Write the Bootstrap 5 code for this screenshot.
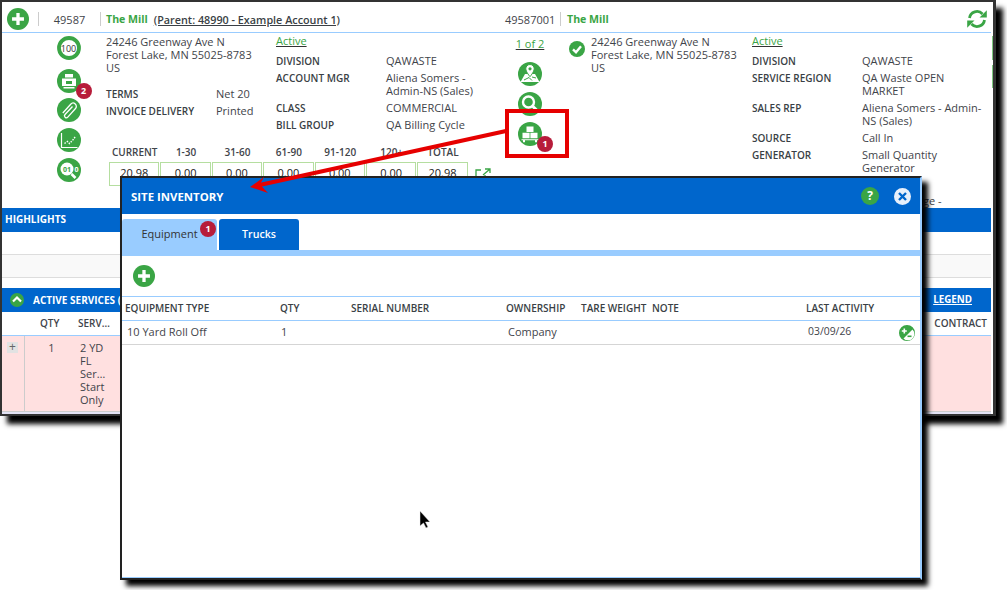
<!DOCTYPE html>
<html lang="en"><head><meta charset="utf-8"><title>Site Inventory</title>
<link href="https://cdn.jsdelivr.net/npm/bootstrap@5.3.0/dist/css/bootstrap.min.css" rel="stylesheet">
<style>
html,body{margin:0;background:#fff;height:590px;overflow:hidden}
body{font-family:"Open Sans","Noto Sans",sans-serif;font-size:11px;line-height:13px;color:#3f444a;position:relative;width:1007px}
a{color:#3aa545}
.win{position:absolute;left:0;top:0;width:996px;height:416px;background:#fff;border:2px solid #333;border-right-width:3px;box-shadow:7px 8px 5px #000;overflow:hidden}
.hdr{height:31px;width:989px;border-bottom:1px solid #99ccff;position:relative;padding-top:4px}
.hdr .half{height:26px}
.sep{border-left:1px solid #ccc;height:14px}
.nm{color:#3aa545;font-weight:700;font-size:10.600px}
.parent{font-weight:600;color:#3a3f45;text-decoration:underline;font-size:10.800px}
.ico{display:block;width:24px;height:24px}
.big{width:22px;height:22px;display:block}
.icocol{width:104px;padding-top:3px;gap:5.7px}
.icowrap{position:relative;width:24px;height:24px}
.cnt{position:absolute;width:16px;height:16px;border-radius:50%;background:#b71c3a;color:#fff;font-size:9px;font-weight:700;line-height:16px;text-align:center;right:-11px;bottom:-6px}
.lbl{font-weight:600;font-size:10px;color:#3a3f45;text-transform:uppercase;margin-top:1px;margin-bottom:-1px}
.dl{display:grid;grid-template-columns:110px 1fr;row-gap:4px}
.act{color:#3aa545;text-decoration:underline;text-decoration-color:#333;line-height:13px;display:block}
.age{display:grid;grid-template-columns:repeat(7,51.4px);margin-left:3px;text-align:center}
.age b{font-size:10px;font-weight:600;line-height:12px;height:16px}
.age i{font-style:normal;border:1px solid #b5dea0;height:24px;color:#222;font-size:11px;line-height:20px;margin-right:1px}
.blue{background:#0066cc;color:#fff;font-weight:700;font-size:10px;height:24px;width:989px;line-height:23px;padding-left:3px}
.grayrow{height:24px;width:989px;background:#f9f9f9;border-top:1px solid #ddd;border-bottom:1px solid #ddd;margin-top:22px}
.svcs{height:24px;margin-top:10px}
.svcs a{color:#fff;text-decoration:underline;font-size:9.800px}
.svhead{height:24px;width:989px;border-bottom:1px solid #99ccff;line-height:22px;font-weight:600;font-size:10px}
.svrow{height:76px;width:989px;background:#ffe0e0;border-bottom:1px solid #ccc;position:relative}
.pl{width:11px;height:11px;background:#e2e2e2;color:#666;line-height:10px;text-align:center;font-size:12px;margin:6px 0 0 5px}
.lav{height:4px;background:#e2e2f4;width:989px}
.stripe{position:absolute;right:0;width:1px;background:#7fc97f}
.modal-box{position:absolute;left:120px;top:176px;width:802px;height:404px;border:2px solid #222;background:#fff;box-shadow:6px 6px 5px #000,inset 0 -1px #99ccff;border-right-color:#99ccff}
.mh{height:36px;background:#0066cc;color:#fff;font-weight:700;font-size:11.400px;padding:0 9px 0 9px}
.tabs-x{height:42px;padding-top:5px;border-bottom:6px solid #99ccff;gap:2px}
.tabx{height:31px;line-height:30px;text-align:center;border-radius:3px 3px 0 0;position:relative;font-size:11px}
.t1{width:95px;background:#99ccff;color:#333}
.t2{width:80px;background:#0066cc;color:#fff;font-weight:600;font-size:10.600px}
.tools{height:40px;padding:9px 0 0 11px}
.tbl{table-layout:fixed;width:100%;margin:0;font-size:11px;color:#3f444a}
.tbl th{font-size:10px;font-weight:600;height:24px;padding:0 0 0 3px;border-top:1px solid #99ccff;border-bottom:1px solid #99ccff;vertical-align:middle;line-height:13px;white-space:nowrap;color:#3a3f45}
.tbl td{height:24px;padding:0 0 2px 3px;border-bottom:1px solid #d5d5d5;vertical-align:middle;color:#3f444a}
.ptr{position:absolute;left:0;top:0;width:1007px;height:590px;pointer-events:none}
.redbox{position:absolute;left:505px;top:109px;width:64px;height:49px;border:4px solid #e60000}
</style></head><body>

<svg width="0" height="0" class="position-absolute"><defs>
<symbol id="plus" viewBox="0 0 24 24"><circle cx="12" cy="12" r="12" fill="#3aa545"/><path d="M12 5.500v13M5.500 12h13" stroke="#fff" stroke-width="3.600"/></symbol>
<symbol id="gauge" viewBox="0 0 24 24"><circle cx="12" cy="12" r="10" fill="#fff" stroke="#3aa545" stroke-width="3.800"/></symbol>
<symbol id="printer" viewBox="0 0 24 24"><circle cx="12" cy="12" r="12" fill="#3aa545"/><path d="M8 5h8v3.500H8zM5 9.500h14v7.500H5zM6.500 18h11v1.500h-11z" fill="#fff"/><path d="M9 12h6v3H9z" fill="#3aa545"/></symbol>
<symbol id="clip" viewBox="0 0 24 24"><circle cx="12" cy="12" r="12" fill="#3aa545"/><path d="M15.500 8.500L8 16.500a1.900 1.900 0 0 0 2.800 2.600L18.500 10.500a3.200 3.200 0 0 0-4.800-4.300L5.800 15" fill="none" stroke="#fff" stroke-width="1.300"/></symbol>
<symbol id="chart" viewBox="0 0 24 24"><circle cx="12" cy="12" r="12" fill="#3aa545"/><path d="M4.500 5v14.500h16" fill="none" stroke="#fff" stroke-width="1.200"/><path d="M7.500 15.500l3-2 2 2 3-3 3-4" fill="none" stroke="#fff" stroke-width="1.400" stroke-dasharray="1.500 1.200"/></symbol>
<symbol id="lens01" viewBox="0 0 24 24"><circle cx="12" cy="12" r="12" fill="#3aa545"/><circle cx="10" cy="11" r="6.500" fill="#fff"/><path d="M14.500 16l4 4" stroke="#fff" stroke-width="2.600"/><text x="10" y="13.500" text-anchor="middle" font-size="7" font-weight="700" fill="#3aa545" font-family="Open Sans">01</text><text x="19.500" y="13.500" text-anchor="middle" font-size="7" font-weight="700" fill="#fff" font-family="Open Sans">0</text></symbol>
<symbol id="map" viewBox="0 0 24 24"><circle cx="12" cy="12" r="12" fill="#3aa545"/><path d="M2.500 20L7 12h10l4.500 8z" fill="#fff"/><path d="M12 2.500a4.200 4.200 0 0 1 4.200 4.200c0 3-4.200 8-4.200 8s-4.200-5-4.200-8A4.200 4.200 0 0 1 12 2.500z" fill="#fff" stroke="#3aa545"/><circle cx="12" cy="6.800" r="1.600" fill="#3aa545"/><path d="M6 18l5-2.500 3 3M14 15l4 1" stroke="#3aa545" fill="none"/></symbol>
<symbol id="lens" viewBox="0 0 24 24"><circle cx="12" cy="12" r="12" fill="#3aa545"/><circle cx="10.500" cy="10" r="5.500" fill="#3aa545" stroke="#fff" stroke-width="2.400"/><path d="M14.500 14l5 5" stroke="#fff" stroke-width="3"/></symbol>
<symbol id="boxes" viewBox="0 0 24 24"><circle cx="12" cy="12" r="12" fill="#3aa545"/><path d="M8.500 4.500h7v5.500h-7zM4.500 10.800h7.100v5.500H4.500zM12.400 10.800h7.100v5.500h-7.100z" fill="#fff"/><path d="M3.500 17.300h17v1h-17zM5 18.300h2v2H5zM17 18.300h2v2h-2z" fill="#fff"/></symbol>
<symbol id="check" viewBox="0 0 16 16"><circle cx="8" cy="8" r="8" fill="#3aa545"/><path d="M4 8.300l3 3 5-6" fill="none" stroke="#fff" stroke-width="2.400"/></symbol>
<symbol id="plusminus" viewBox="0 0 16 16"><circle cx="8" cy="8" r="7.200" fill="#3aa545" stroke="#3aa545" stroke-width="1.600"/><path d="M13.500 4.500L4.500 13.500A6.300 6.300 0 0 0 13.500 4.500z" fill="#fff"/><path d="M2.800 6h5M5.300 3.500v5" stroke="#fff" stroke-width="1.600"/><path d="M8.500 11.300h4" stroke="#3aa545" stroke-width="1.600"/></symbol>
</defs></svg>

<div class="win">
  <div class="hdr d-flex">
    <div class="half d-flex align-items-center" style="width:503px">
      <svg class="big me-2" style="margin-left:5px"><use href="#plus"/></svg>
      <span class="sep" style="margin-left:1px"></span>
      <span style="width:61px;text-align:center">49587</span>
      <span class="sep"></span>
      <span class="nm" style="margin-left:5px">The Mill</span>
      <span class="parent" style="margin-left:6px">(Parent: 48990 - Example Account 1)</span>
    </div>
    <div class="half d-flex align-items-center flex-grow-1">
      <span style="width:55px">49587001</span>
      <span class="sep"></span>
      <span class="nm" style="margin-left:6px">The Mill</span>
      <svg class="ms-auto" width="20" height="20" viewBox="0 0 20 20" style="margin-right:4px"><g fill="none" stroke="#3aa545" stroke-width="2.800"><path d="M2.500 9A7.500 7.500 0 0 1 15.500 5"/><path d="M17.500 11A7.500 7.500 0 0 1 4.500 15"/></g><path d="M19.800 1.200v7.300h-7.300zM.2 18.800v-7.300h7.300z" fill="#3aa545"/></svg>
    </div>
  </div>

  <div class="d-flex" style="height:175px">
    <div class="d-flex" style="width:503px">
      <div class="icocol d-flex flex-column align-items-center" style="padding-left:29px;width:104px;flex:none">
        <div class="icowrap"><svg class="ico"><use href="#gauge"/></svg><span class="position-absolute top-50 start-50 translate-middle" style="font-size:9px;color:#333;font-weight:500">100</span></div>
        <div class="icowrap" style="margin-top:3px"><svg class="ico"><use href="#printer"/></svg><span class="cnt">2</span></div>
        <div class="icowrap"><svg class="ico"><use href="#clip"/></svg></div>
        <div class="icowrap"><svg class="ico"><use href="#chart"/></svg></div>
        <div class="icowrap"><svg class="ico"><use href="#lens01"/></svg></div>
      </div>
      <div class="flex-grow-1">
        <div class="d-flex" style="height:113px;padding-top:2px">
          <div style="width:170px;flex:none">
            <div>24246 Greenway Ave N<br>Forest Lake, MN 55025-8783<br>US</div>
            <div class="dl" style="margin-top:13px">
              <span class="lbl">Terms</span><span>Net 20</span>
              <span class="lbl">Invoice Delivery</span><span>Printed</span>
            </div>
          </div>
          <div class="flex-grow-1">
            <a class="act" href="#" style="margin-top:-1px">Active</a>
            <div class="dl" style="margin-top:7px">
              <span class="lbl">Division</span><span>QAWASTE</span>
              <span class="lbl">Account Mgr</span><span>Aliena Somers -<br>Admin-NS (Sales)</span>
              <span class="lbl">Class</span><span>COMMERCIAL</span>
              <span class="lbl">Bill Group</span><span>QA Billing Cycle</span>
            </div>
          </div>
        </div>
        <div class="d-flex">
          <div class="age">
            <b>CURRENT</b><b>1-30</b><b>31-60</b><b>61-90</b><b>91-120</b><b>120+</b><b>TOTAL</b>
            <i>20.98</i><i>0.00</i><i>0.00</i><i>0.00</i><i>0.00</i><i>0.00</i><i>20.98</i>
          </div>
          <svg style="margin-top:22px;margin-left:6px" width="16" height="12" viewBox="0 0 16 12"><path d="M6 2H1v9h9V7M8 7l7-6M10 1h5v4" fill="none" stroke="#3aa545" stroke-width="1.300"/></svg>
        </div>
      </div>
    </div>
    <div class="d-flex flex-grow-1">
      <div class="d-flex flex-column align-items-center" style="width:50px;flex:none;padding-top:3px;gap:6px">
        <a href="#" class="act" style="text-align:center;margin-bottom:6px;margin-top:1px">1 of 2</a>
        <svg class="ico"><use href="#map"/></svg>
        <svg class="ico"><use href="#lens"/></svg>
        <div class="icowrap"><svg class="ico"><use href="#boxes"/></svg><span class="cnt">1</span></div>
      </div>
      <div class="d-flex" style="padding-top:2px;padding-left:14px">
        <svg width="16" height="16" style="margin-right:6px;margin-top:6px;flex:none"><use href="#check"/></svg>
        <div style="width:161px;flex:none">24246 Greenway Ave N<br>Forest Lake, MN 55025-8783<br>US</div>
        <div style="width:238px;flex:none">
          <a class="act" href="#" style="margin-top:-1px">Active</a>
          <div class="dl" style="margin-top:7px;grid-template-columns:110px 122px">
            <span class="lbl">Division</span><span>QAWASTE</span>
            <span class="lbl">Service Region</span><span>QA Waste OPEN<br>MARKET</span>
            <span class="lbl">Sales Rep</span><span>Aliena Somers - Admin-<br>NS (Sales)</span>
            <span class="lbl">Source</span><span>Call In</span>
            <span class="lbl">Generator</span><span>Small Quantity<br>Generator</span>
            <span></span><span style="margin-top:16px;padding-left:61px;white-space:nowrap">ge -</span>
          </div>
        </div>
      </div>
    </div>
  </div>

  <div class="blue">HIGHLIGHTS</div>
  <div class="grayrow"></div>
  <div class="blue svcs d-flex justify-content-between" style="padding-right:19px">
    <span class="d-flex align-items-center"><svg width="14" height="14" viewBox="0 0 14 14" style="margin:0 9px 0 5px"><circle cx="7" cy="7" r="7" fill="#3aa545"/><path d="M3 8.500l4-4 4 4" fill="none" stroke="#fff" stroke-width="2.200"/></svg>ACTIVE SERVICES (</span>
    <a href="#" class="fw-bold">LEGEND</a>
  </div>
  <div class="svhead d-flex"><span style="width:38px"></span><span style="width:38px">QTY</span><span>SERV…</span><span class="ms-auto" style="margin-right:4px">CONTRACT</span></div>
  <div class="svrow d-flex">
    <div style="width:23px;border-right:1px solid #ccc"><div class="pl">+</div></div>
    <div style="width:53px;text-align:center;padding-top:5px">1</div>
    <div style="padding-top:5px;padding-left:2px">2 YD<br>FL<br>Ser…<br>Start<br>Only</div>
  </div>
  <div class="lav"></div>
  <div class="stripe" style="top:34px;height:24px"></div>
  <div class="stripe" style="top:63px;height:23px"></div>
</div>

<div class="modal-box">
  <div class="mh d-flex align-items-center justify-content-between">
    <span>SITE INVENTORY</span>
    <span class="d-flex align-items-center" style="gap:15px">
      <span class="rounded-circle text-center fw-bold" style="width:18px;height:18px;background:#3aa545;color:#fff;font-size:12px;line-height:18px">?</span>
      <svg width="17" height="17" viewBox="0 0 17 17"><circle cx="8.500" cy="8.500" r="8.500" fill="#e8f0fb"/><path d="M5 5l7 7M12 5l-7 7" stroke="#0066cc" stroke-width="2.400"/></svg>
    </span>
  </div>
  <div class="tabs-x d-flex">
    <div class="tabx t1">Equipment<span class="cnt" style="right:1px;bottom:auto;top:2px">1</span></div>
    <div class="tabx t2">Trucks</div>
  </div>
  <div class="tools"><svg class="big"><use href="#plus"/></svg></div>
  <table class="tbl table">
    <colgroup><col style="width:155px"><col style="width:71px"><col style="width:155px"><col style="width:75px"><col style="width:71px"><col style="width:154px"><col style="width:85px"><col></colgroup>
    <thead><tr><th>EQUIPMENT TYPE</th><th>QTY</th><th>SERIAL NUMBER</th><th>OWNERSHIP</th><th>TARE WEIGHT</th><th>NOTE</th><th>LAST ACTIVITY</th><th></th></tr></thead>
    <tbody><tr><td style="padding-left:5px">10 Yard Roll Off</td><td style="padding-left:4px">1</td><td></td><td style="padding-left:5px">Company</td><td></td><td></td><td style="padding-left:5px;font-size:10.400px">03/09/26</td><td style="padding:0 0 0 11px"><svg width="16" height="16" style="display:block"><use href="#plusminus"/></svg></td></tr></tbody>
  </table>
</div>

<div class="redbox"></div>
<svg class="ptr" viewBox="0 0 1007 590">
  <path d="M506 131L255 186" stroke="#e60000" stroke-width="4"/>
  <path d="M250 187L264 177L260 184.500L268 193z" fill="#e60000"/>
  <path d="M420 511v15l3.500-3 2.500 5 2-1-2.500-5h4.500z" fill="#000" stroke="#eee" stroke-width=".5"/>
</svg>
</body></html>
